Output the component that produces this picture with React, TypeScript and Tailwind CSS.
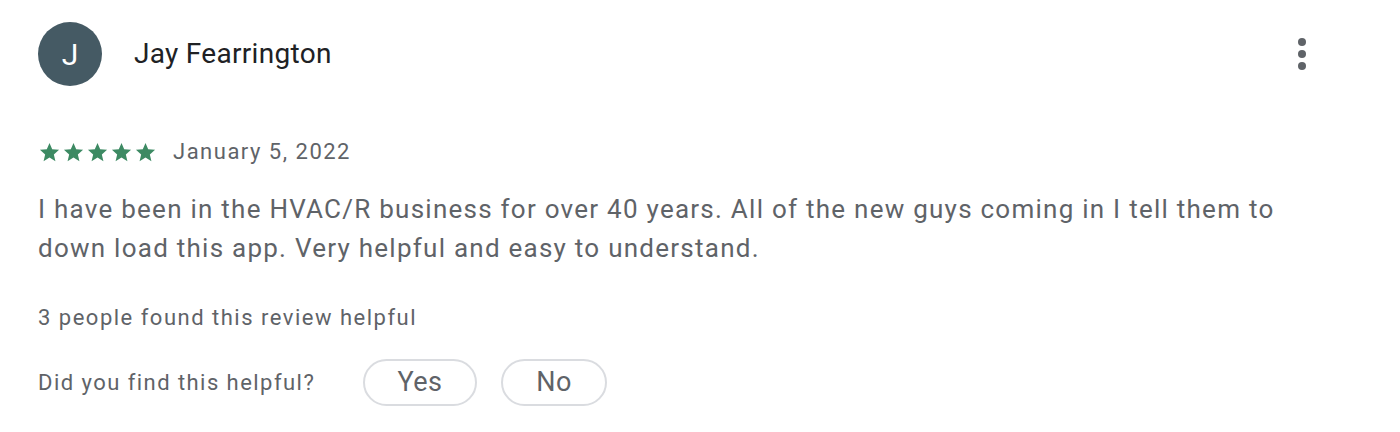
import React from 'react';

// Una estrella de valoración
function Star() {
  return (
    <svg viewBox="0 0 24 24" className="w-[23px] h-[23px]" fill="#3d8a63">
      <path d="M12 17.27 18.18 21l-1.64-7.03L22 9.24l-7.19-.61L12 2 9.19 8.63 2 9.24l5.46 4.73L5.82 21z" />
    </svg>
  );
}

export default function App() {
  return (
    <div className="w-[1400px] h-[432px] bg-white font-['Roboto',sans-serif] text-[#5f6368]">
      <div className="pl-[38px] pr-[66px] pt-[22px]">
        {/* Cabecera */}
        <div className="flex items-center">
          <div className="w-[64px] h-[64px] rounded-full bg-[#455a64] flex items-center justify-center text-white text-[30px]">
            J
          </div>
          <div className="ml-[32px] text-[28px] tracking-[0.3px] text-[#202124] flex-1">Jay Fearrington</div>
          <button type="button" className="w-[24px] h-[40px] flex flex-col items-center justify-center gap-[4px] mr-[20px]">
            <span className="w-[8px] h-[8px] rounded-full bg-[#5f6368]" />
            <span className="w-[8px] h-[8px] rounded-full bg-[#5f6368]" />
            <span className="w-[8px] h-[8px] rounded-full bg-[#5f6368]" />
          </button>
        </div>

        {/* Estrellas y fecha */}
        <div className="flex items-center mt-[52px]">
          <div className="flex gap-[1px]">
            <Star />
            <Star />
            <Star />
            <Star />
            <Star />
          </div>
          <span className="ml-[16px] text-[22px] tracking-[1.5px] leading-[28px]">January 5, 2022</span>
        </div>

        {/* Texto */}
        <p className="mt-[24px] text-[26px] tracking-[1.25px] leading-[39px] w-[1270px]">
          I have been in the HVAC/R business for over 40 years. All of the new guys coming in I tell them to down load this app. Very helpful and easy to understand.
        </p>

        <div className="mt-[36px] text-[22px] tracking-[1.5px] leading-[28px]">3 people found this review helpful</div>

        <div className="flex items-center mt-[27px]">
          <span className="text-[22px] tracking-[1.45px] leading-[28px] w-[325px]">Did you find this helpful?</span>
          <button type="button" className="w-[114px] h-[47px] rounded-full border-2 border-[#dadce0] text-[27px] tracking-[0.5px] text-[#5f6368]">
            Yes
          </button>
          <button type="button" className="ml-[24px] w-[106px] h-[47px] rounded-full border-2 border-[#dadce0] text-[27px] tracking-[0.5px] text-[#5f6368]">
            No
          </button>
        </div>
      </div>
    </div>
  );
}
